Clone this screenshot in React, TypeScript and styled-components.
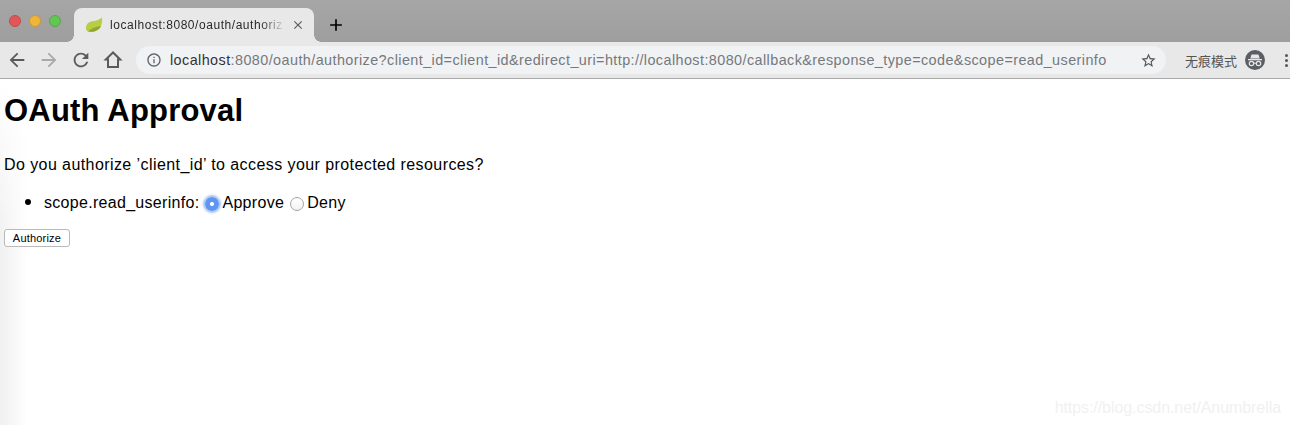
import React from "react";
import styled, { createGlobalStyle } from "styled-components";
import { MdArrowBack, MdArrowForward, MdRefresh, MdInfoOutline, MdStarBorder, MdClose, MdAdd } from "react-icons/md";

const GlobalStyle = createGlobalStyle`
    html, body {
        margin: 0;
        padding: 0;
        background: #fff;
    }
    body {
        font-family: "Liberation Sans", Arial, sans-serif;
        color: #000;
        overflow: hidden;
    }
`;

const Page = styled.div`
    position: relative;
    width: 1290px;
    height: 425px;
    overflow: hidden;
    background: #fff;
`;

const TabStrip = styled.div`
    display: flex;
    align-items: flex-end;
    height: 42px;
    background: linear-gradient(#a6a6a6, #9e9e9e);
`;

const Lights = styled.div`
    display: flex;
    gap: 8px;
    align-items: center;
    align-self: flex-start;
    margin: 15px 0 0 9px;
    width: 65px;
`;

const Light = styled.span<{ $color: string; $edge: string }>`
    width: 12px;
    height: 12px;
    border-radius: 50%;
    background: ${(props) => props.$color};
    border: 0.5px solid ${(props) => props.$edge};
    box-sizing: border-box;
`;

const Tab = styled.div`
    position: relative;
    display: flex;
    align-items: center;
    width: 240px;
    height: 34px;
    box-sizing: border-box;
    padding: 0 10px 0 11px;
    background: #e8e8e8;
    border-radius: 8px 8px 0 0;

    &::before,
    &::after {
        content: "";
        position: absolute;
        bottom: 0;
        width: 7px;
        height: 7px;
    }
    &::before {
        left: -7px;
        background: radial-gradient(circle at 0 0, transparent 6.5px, #e8e8e8 7px);
    }
    &::after {
        right: -7px;
        background: radial-gradient(circle at 100% 0, transparent 6.5px, #e8e8e8 7px);
    }
`;

const TabTitle = styled.span`
    flex: 1;
    margin-left: 7px;
    font-size: 12px;
    letter-spacing: 0.55px;
    color: #2a2a2a;
    white-space: nowrap;
    -webkit-mask-image: linear-gradient(to right, #000 150px, transparent 176px);
    mask-image: linear-gradient(to right, #000 150px, transparent 176px);
`;

const CloseIcon = styled.span`
    display: flex;
    color: #5a5a5a;
    margin-right: -1px;
`;

const NewTab = styled.div`
    display: flex;
    align-items: center;
    align-self: flex-start;
    margin: 15px 0 0 12px;
    color: #000;
`;

const Toolbar = styled.div`
    display: flex;
    align-items: center;
    height: 37px;
    box-sizing: border-box;
    padding: 0 0 0 6px;
    background: #e8e8e8;
    border-bottom: 1px solid #a9a9a9;
`;

const NavButtons = styled.div`
    display: flex;
    align-items: center;
    gap: 10px;
    width: 130px;
    flex-shrink: 0;
`;

const NavIcon = styled.span<{ $muted?: boolean }>`
    display: flex;
    color: ${(props) => (props.$muted ? "#a9a9a9" : "#5a5a5a")};
`;

const Omnibox = styled.div`
    display: flex;
    align-items: center;
    width: 1030px;
    height: 28px;
    box-sizing: border-box;
    padding: 0 9px 0 10px;
    border-radius: 14px;
    background: #f1f2f4;
    flex-shrink: 0;
    color: #5f6368;
`;

const Url = styled.span`
    flex: 1;
    margin-left: 8px;
    font-size: 14.4px;
    letter-spacing: 0.42px;
    color: #75797c;
    white-space: nowrap;
    overflow: hidden;
`;

const Host = styled.span`
    color: #333;
`;

const Incognito = styled.div`
    display: flex;
    align-items: center;
    margin-left: 19px;
    color: #555;
    font-size: 13px;
    font-family: "Noto Sans CJK SC", sans-serif;
    gap: 8px;
`;

const MenuDots = styled.div`
    display: flex;
    flex-direction: column;
    gap: 2px;
    margin-left: 20px;
`;

const Dot = styled.span`
    width: 3px;
    height: 3px;
    border-radius: 50%;
    background: #555;
`;

const Content = styled.main`
    position: relative;
    z-index: 1;
    padding: 0 4px;
`;

const Heading = styled.h1`
    margin: 0;
    padding-top: 13px;
    font-size: 31px;
    line-height: 37px;
    font-weight: bold;
    letter-spacing: 0.2px;
`;

const Question = styled.p`
    margin: 27px 0 0;
    font-size: 16px;
    line-height: 18px;
    letter-spacing: 0.42px;
`;

const ScopeList = styled.ul`
    margin: 17px 0 0;
    padding-left: 40px;
`;

const ScopeItem = styled.li`
    font-size: 16px;
    line-height: 20px;
    letter-spacing: 0.3px;

    &::marker {
        font-size: 21px;
    }
`;

const ScopeRow = styled.span`
    display: inline-flex;
    align-items: center;
`;

const RadioMark = styled.span<{ $checked?: boolean }>`
    display: inline-block;
    width: 14px;
    height: 14px;
    box-sizing: border-box;
    border-radius: 50%;
    margin: 2px 3px 0 6px;
    ${(props) =>
        props.$checked
            ? `
        background: radial-gradient(circle, #fff 0 1.6px, #5f95f3 2.4px);
        box-shadow: 0 0 2px 2px #a4c2f8;
    `
            : `
        background: linear-gradient(#fff, #f2f2f2);
        border: 1px solid #a5a5a5;
    `}
`;

const AuthorizeButton = styled.button`
    display: block;
    width: 66px;
    height: 18px;
    margin-top: 16px;
    padding: 0;
    font-family: "Liberation Sans", Arial, sans-serif;
    font-size: 11px;
    letter-spacing: 0.2px;
    color: #000;
    background: #fff;
    border: 1px solid #b9b9b9;
    border-radius: 3px;
`;

const EdgeShade = styled.div`
    position: absolute;
    left: 0;
    top: 79px;
    bottom: 0;
    width: 28px;
    pointer-events: none;
    background: linear-gradient(to right, #f0f0f0, rgba(255, 255, 255, 0));
    -webkit-mask-image: linear-gradient(to bottom, transparent 0, #000 170px);
    mask-image: linear-gradient(to bottom, transparent 0, #000 170px);
`;

const Watermark = styled.div`
    position: absolute;
    right: 9px;
    bottom: 8px;
    font-size: 16px;
    letter-spacing: -0.07px;
    color: #f1f1f1;
`;

const LeafIcon = () => (
    <svg width="18" height="16" viewBox="0 0 18 16">
        <path d="M1 11C1 6 5 4.500 9 4c3-.4 6-1.500 8-3.500 .5 5-.5 10-4.500 12.500-3.500 2.200-7 2-9.500 1.500C1.500 14 1 12.500 1 11z" fill="#b9cc44" />
        <path d="M3 14.500C6 11.500 10 10 16 9c-.8 2-1.800 3-3.500 4-3.300 2.100-6.500 2-9.500 1.500z" fill="#8fa62f" />
    </svg>
);

const HomeIcon = () => (
    <svg width="22" height="22" viewBox="0 0 22 22">
        <path d="M11 3.500 3.800 10.500H6V18H16V10.500H18.200Z" fill="none" stroke="currentColor" strokeWidth="2" strokeLinejoin="miter" />
    </svg>
);

const IncognitoIcon = () => (
    <svg width="20" height="20" viewBox="0 0 20 20">
        <circle cx="10" cy="10" r="10" fill="#5b5e62" />
        <path d="M6.500 4.500h7l1.200 4h-9.400z" fill="#e8e8e8" />
        <rect x="3" y="9" width="14" height="1.300" fill="#e8e8e8" />
        <circle cx="6.500" cy="13.500" r="2.200" fill="none" stroke="#e8e8e8" strokeWidth="1.200" />
        <circle cx="13.500" cy="13.500" r="2.200" fill="none" stroke="#e8e8e8" strokeWidth="1.200" />
        <path d="M8.700 13.200h2.600" stroke="#e8e8e8" strokeWidth="1" />
    </svg>
);

export default function App() {
    return (
        <Page>
            <GlobalStyle />
            <TabStrip>
                <Lights>
                    <Light $color="#e0575a" $edge="#c44a4c" />
                    <Light $color="#eeb53b" $edge="#cf9a2f" />
                    <Light $color="#62c653" $edge="#55a947" />
                </Lights>
                <Tab>
                    <LeafIcon />
                    <TabTitle>localhost:8080/oauth/authoriz</TabTitle>
                    <CloseIcon><MdClose size={14} /></CloseIcon>
                </Tab>
                <NewTab>
                    <MdAdd size={20} />
                </NewTab>
            </TabStrip>
            <Toolbar>
                <NavButtons>
                    <NavIcon><MdArrowBack size={22} /></NavIcon>
                    <NavIcon $muted><MdArrowForward size={22} /></NavIcon>
                    <NavIcon><MdRefresh size={22} /></NavIcon>
                    <NavIcon><HomeIcon /></NavIcon>
                </NavButtons>
                <Omnibox>
                    <MdInfoOutline size={16} />
                    <Url>
                        <Host>localhost</Host>:8080/oauth/authorize?client_id=client_id&amp;redirect_uri=http://localhost:8080/callback&amp;response_type=code&amp;scope=read_userinfo
                    </Url>
                    <MdStarBorder size={17} color="#555" />
                </Omnibox>
                <Incognito>
                    无痕模式
                    <IncognitoIcon />
                </Incognito>
                <MenuDots>
                    <Dot />
                    <Dot />
                    <Dot />
                </MenuDots>
            </Toolbar>
            <Content>
                <Heading>OAuth Approval</Heading>
                <Question>Do you authorize ’client_id’ to access your protected resources?</Question>
                <ScopeList>
                    <ScopeItem>
                        <ScopeRow>
                            scope.read_userinfo:
                            <RadioMark $checked />
                            Approve
                            <RadioMark />
                            Deny
                        </ScopeRow>
                    </ScopeItem>
                </ScopeList>
                <AuthorizeButton>Authorize</AuthorizeButton>
            </Content>
            <EdgeShade />
            <Watermark>https://blog.csdn.net/Anumbrella</Watermark>
        </Page>
    );
}
